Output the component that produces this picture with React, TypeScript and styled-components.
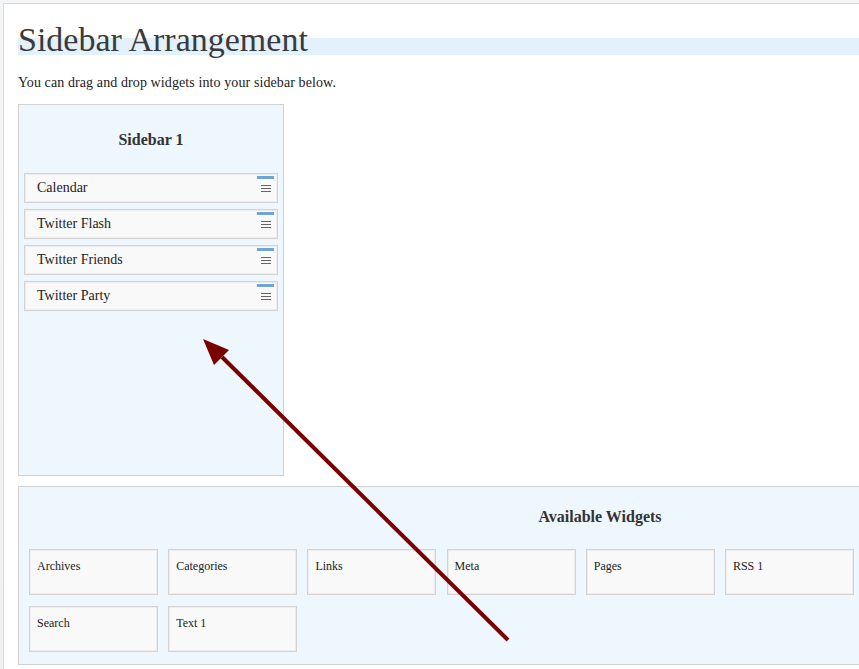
import React, { FC } from 'react';
import styled, { createGlobalStyle } from 'styled-components';

const sidebarWidgets = ['Calendar', 'Twitter Flash', 'Twitter Friends', 'Twitter Party'];
const availableWidgets = ['Archives', 'Categories', 'Links', 'Meta', 'Pages', 'RSS 1', 'Search', 'Text 1'];

const GlobalStyle = createGlobalStyle`
  html, body {
    margin: 0;
    padding: 0;
    overflow: hidden;
    background: #ffffff;
  }
  body {
    font-family: 'Liberation Serif', 'Times New Roman', serif;
    color: #333;
  }
`;

const App: FC = () => {
  return (
    <>
      <GlobalStyle />
      <Page>
        <Frame>
          <Title>Sidebar Arrangement</Title>
          <Intro>You can drag and drop widgets into your sidebar below.</Intro>
          <SidebarBox>
            <BoxHeading>Sidebar 1</BoxHeading>
            <WidgetList>
              {sidebarWidgets.map((name) => (
                <SidebarWidget key={name}>
                  {name}
                  <Handle>
                    <HandleBar />
                    <HandleLines>
                      <span />
                      <span />
                      <span />
                    </HandleLines>
                  </Handle>
                </SidebarWidget>
              ))}
            </WidgetList>
          </SidebarBox>
          <AvailableBox>
            <BoxHeading $large>Available Widgets</BoxHeading>
            <WidgetGrid>
              {availableWidgets.map((name) => (
                <WidgetCard key={name}>{name}</WidgetCard>
              ))}
            </WidgetGrid>
          </AvailableBox>
        </Frame>
        <Arrow viewBox='0 0 859 669' width='859' height='669'>
          <line x1='508' y1='640' x2='222' y2='357' stroke='#7a0000' strokeWidth='4' />
          <polygon points='203,339 229,350 214,365' fill='#7a0000' />
        </Arrow>
      </Page>
    </>
  );
};

const Page = styled.div`
  position: relative;
  width: 859px;
  height: 669px;
  overflow: hidden;
  background: linear-gradient(#f3f5f7, #eef0f2);
  padding: 3px 0 0 3px;
  box-sizing: border-box;
`;

const Frame = styled.div`
  width: 1300px;
  height: 700px;
  background: #ffffff;
  border-top: 1px solid #d6d8da;
  border-left: 1px solid #dcdcdc;
  padding: 17px 0 0 14px;
  box-sizing: border-box;
`;

const Title = styled.h2`
  margin: 0;
  font-family: 'Liberation Serif', 'Times New Roman', serif;
  font-weight: 400;
  font-size: 34px;
  line-height: 38px;
  color: #3a3a3a;
  background: linear-gradient(transparent 0, transparent 17px, #e3f1fd 17px, #e3f1fd 34px, transparent 34px);
`;

const Intro = styled.p`
  margin: 16px 0 0;
  font-size: 14px;
  line-height: 16px;
  letter-spacing: 0.1px;
  color: #222;
`;

const SidebarBox = styled.div`
  margin-top: 13px;
  width: 266px;
  height: 372px;
  box-sizing: border-box;
  background: #eef6fe;
  border: 1px solid #cfd1d3;
  padding: 0 5px;
`;

const BoxHeading = styled.h3<{ $large?: boolean }>`
  margin: 0;
  padding-top: ${(p) => (p.$large ? '21px' : '26px')};
  height: ${(p) => (p.$large ? '62px' : '68px')};
  box-sizing: border-box;
  text-align: center;
  font-size: 16px;
  line-height: 18px;
  font-weight: 700;
  color: #333;
`;

const WidgetList = styled.div`
  display: flex;
  flex-direction: column;
  gap: 6px;
`;

const SidebarWidget = styled.div`
  position: relative;
  height: 30px;
  box-sizing: border-box;
  display: flex;
  align-items: center;
  padding-left: 12px;
  background: #f9f9f9;
  border: 1px solid #d3d3d3;
  box-shadow: inset 0 0 0 1px #ececec;
  font-size: 14px;
  color: #222;
`;

const Handle = styled.div`
  position: absolute;
  top: 2px;
  right: 3px;
  width: 17px;
  display: flex;
  flex-direction: column;
  align-items: center;
`;

const HandleBar = styled.div`
  width: 17px;
  height: 3px;
  background: #6fa4d6;
`;

const HandleLines = styled.div`
  margin-top: 6px;
  display: flex;
  flex-direction: column;
  gap: 2px;

  span {
    display: block;
    width: 10px;
    height: 1px;
    background: #666;
  }
`;

const AvailableBox = styled.div`
  margin-top: 10px;
  width: 1164px;
  height: 179px;
  box-sizing: border-box;
  background: #eef6fe;
  border: 1px solid #cfd1d3;
  padding: 0 10px;
`;

const WidgetGrid = styled.div`
  width: 845px;
  display: grid;
  grid-template-columns: repeat(6, 129px);
  column-gap: 10.2px;
  row-gap: 11px;
`;

const WidgetCard = styled.div`
  height: 46px;
  box-sizing: border-box;
  padding: 9px 7px;
  background: #f9f9f9;
  border: 1px solid #d3d3d3;
  box-shadow: inset 0 0 0 1px #ececec;
  font-size: 12px;
  line-height: 14px;
  color: #222;
`;

const Arrow = styled.svg`
  position: absolute;
  left: 0;
  top: 0;
  pointer-events: none;
`;

export default App;
